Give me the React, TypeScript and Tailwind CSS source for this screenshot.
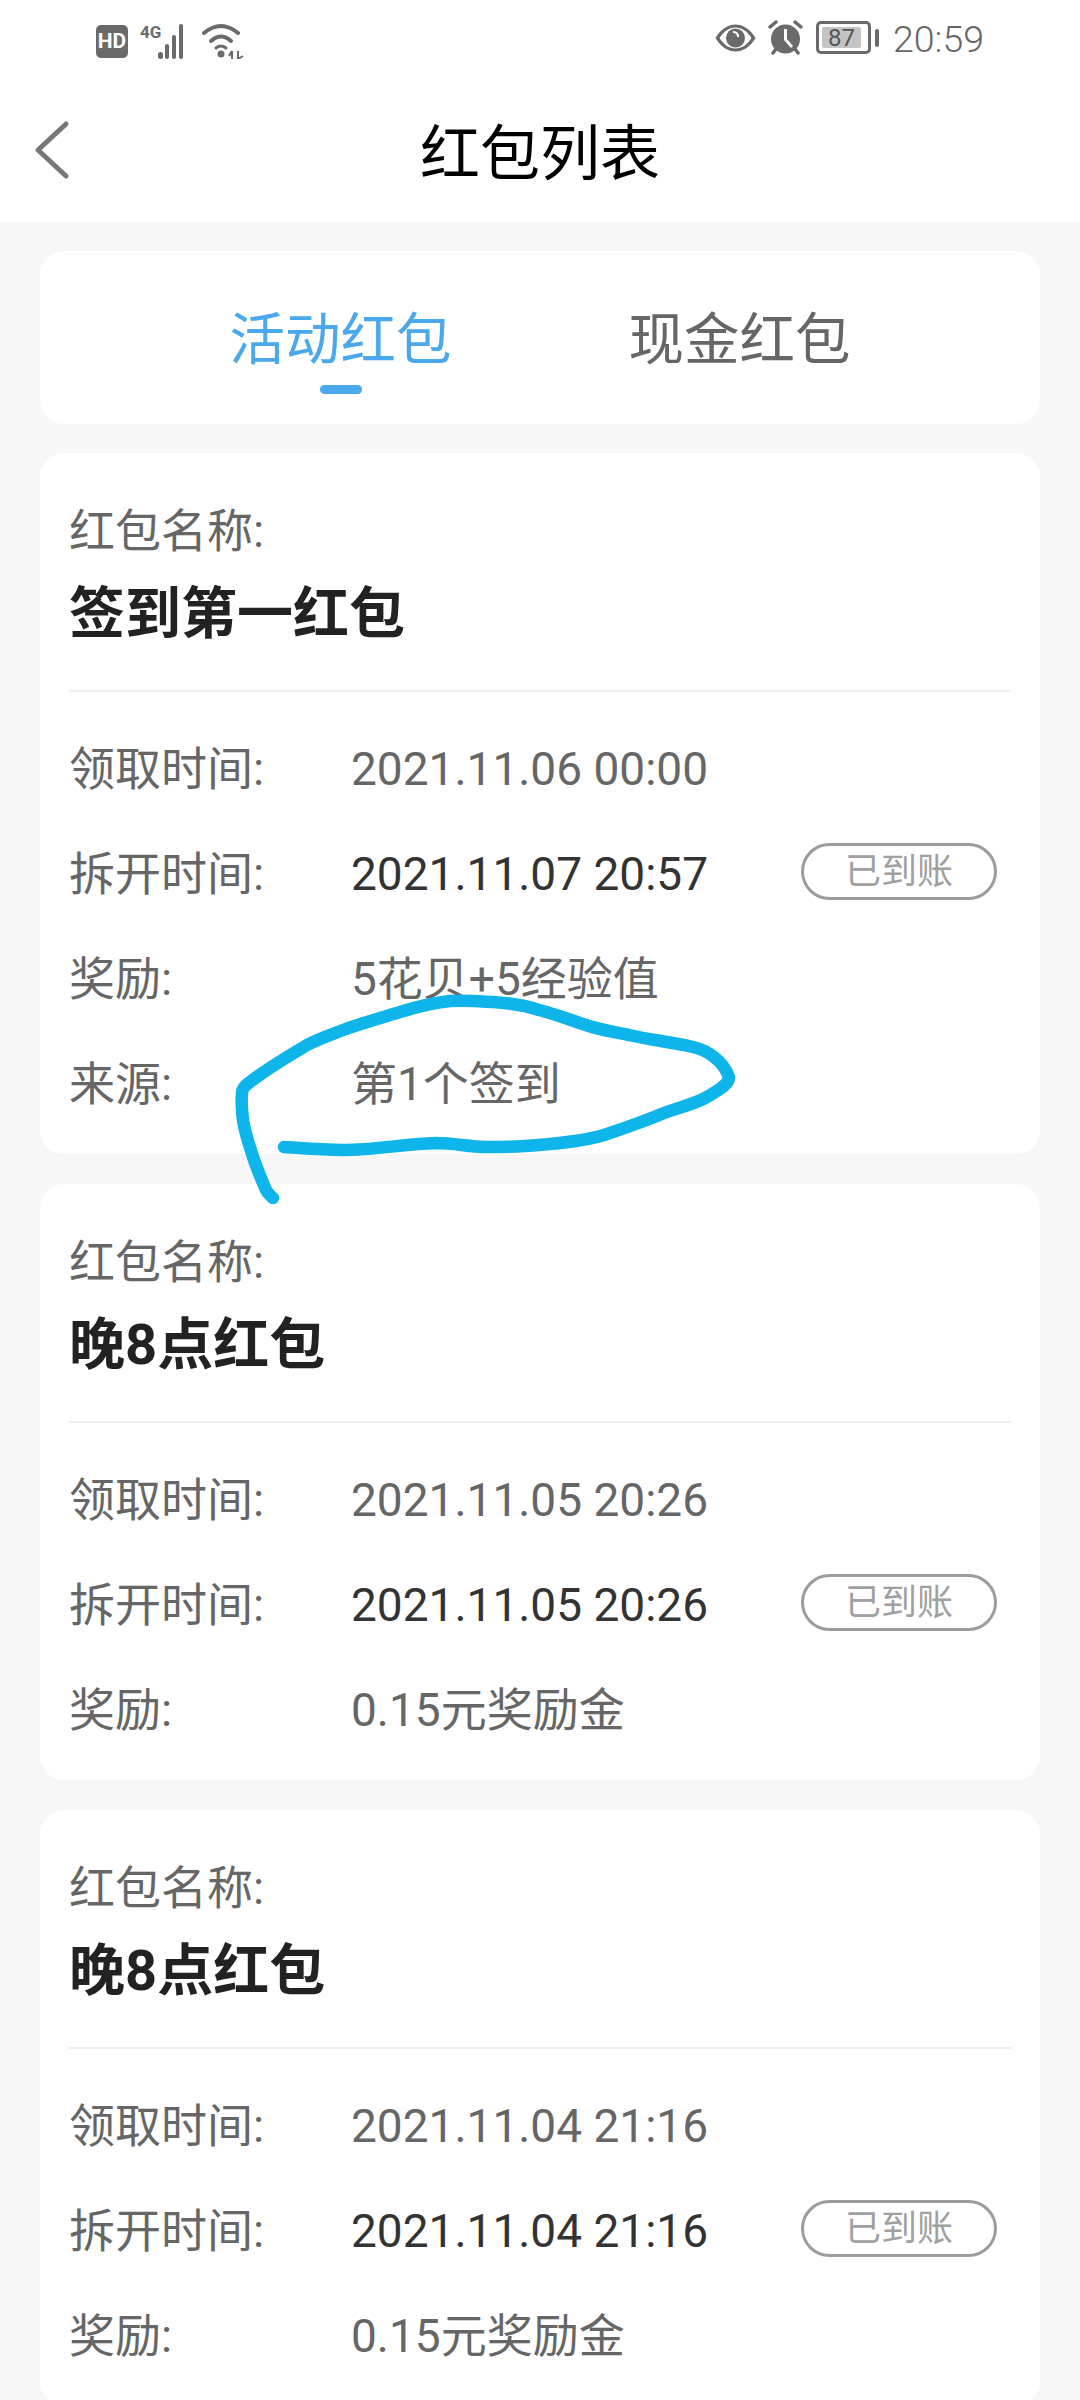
const FONT = "font-['Roboto','Noto_Sans_CJK_SC',sans-serif]";

function StatusLeft() {
  return (
    <div className="flex items-center">
      <div className="flex h-[33px] w-[32px] items-center justify-center rounded-[5px] bg-[#6a6a6a] text-[21px] leading-none font-bold text-white">HD</div>
      <div className="relative ml-[12px] h-[35px] w-[53px]">
        <span className="absolute top-[-1px] left-0 text-[17px] leading-[18px] font-bold text-[#6a6a6a]">4G</span>
        <svg className="absolute top-0 left-0" width="53" height="35" viewBox="0 0 53 35" fill="#6a6a6a">
          <rect x="18" y="28" width="5" height="7" rx="2.5" />
          <rect x="25" y="20" width="4" height="15" rx="2" />
          <rect x="32" y="11" width="4" height="24" rx="2" />
          <rect x="39" y="0" width="4" height="35" rx="2" />
        </svg>
      </div>
      <svg className="ml-[9px]" width="43" height="36" viewBox="0 0 43 36" fill="none">
        <path d="M2 10 Q19 -4 36 10" stroke="#6a6a6a" strokeWidth="4" strokeLinecap="round" />
        <path d="M9 18 Q19 9 29 18" stroke="#6a6a6a" strokeWidth="4" strokeLinecap="round" />
        <path d="M14 25 Q19 21 24 25" stroke="#6a6a6a" strokeWidth="3" strokeLinecap="round" />
        <circle cx="19" cy="31" r="3.5" fill="#6a6a6a" />
        <path d="M30 28 L30 36 M27 33 L30 28 M36 28 L36 36 L41 33" stroke="#6a6a6a" strokeWidth="2" />
      </svg>
    </div>
  );
}

function StatusRight() {
  return (
    <div className="flex items-center">
      <svg width="41" height="28" viewBox="0 0 41 28">
        <path fillRule="evenodd" fill="#6a6a6a" d="M0.5 14 C6 5 13 0.5 20.5 0.5 C28 0.5 35 5 40.5 14 C35 23 28 27.5 20.5 27.5 C13 27.5 6 23 0.5 14 Z M4.5 14 C9 21 14.5 24.5 20.5 24.5 C26.5 24.5 32 21 36.5 14 C32 7 26.5 3.5 20.5 3.5 C14.5 3.5 9 7 4.5 14 Z" />
        <circle cx="20.5" cy="14" r="9.5" fill="#6a6a6a" />
        <path d="M18 8 A4.5 4.5 0 0 1 23 13" stroke="#fff" strokeWidth="2" fill="none" />
      </svg>
      <svg className="ml-[12px]" width="35" height="35" viewBox="0 0 35 35" fill="#6a6a6a">
        <circle cx="17.5" cy="19" r="14.5" />
        <path d="M16 9 L16 20 L23 28 L25 26 L19 19 L19 9 Z" fill="#fff" />
        <path d="M2 7 L8 2 M33 7 L27 2 M5 33 L8 29 M30 33 L27 29" stroke="#6a6a6a" strokeWidth="3.5" strokeLinecap="round" />
      </svg>
      <div className="relative ml-[13px] flex h-[33px] w-[55px] items-center rounded-[5px] border-[3px] border-[#6a6a6a] p-[3px]">
        <div className="flex h-full w-[39px] items-center justify-center rounded-[2px] bg-[#c4c4c4] text-[24px] leading-none text-[#555]">87</div>
      </div>
      <div className="ml-[4px] h-[18px] w-[4px] rounded-[2px] bg-[#6a6a6a]" />
      <span className="mt-[3px] ml-[14px] text-[37.5px] leading-[40px] font-light text-[#666]">20:59</span>
    </div>
  );
}

function Row({ label, value, dark, pill }: { label: string; value: string; dark?: boolean; pill?: boolean }) {
  return (
    <div className="flex h-[105px] items-center">
      <div className="w-[282px] text-[46px] leading-[60px] text-[#666]">{label}</div>
      <div className={dark ? "flex-1 text-[46px] leading-[60px] text-[#333]" : "flex-1 text-[46px] leading-[60px] text-[#666]"}>{value}</div>
      {pill && (
        <div className="mr-[14px] mb-[5px] flex h-[57px] w-[196px] items-center justify-center rounded-full border-[3px] border-[#9c9c9c] pt-[2px] text-[36px] leading-none text-[#a0a0a0]">已到账</div>
      )}
    </div>
  );
}

function Card({ name, rows }: { name: string; rows: { label: string; value: string; dark?: boolean; pill?: boolean }[] }) {
  return (
    <section className="mx-[40px] mb-[30px] shrink-0 rounded-[24px] bg-white pt-[48px] pr-[29px] pb-[18px] pl-[29px]">
      <div className="text-[46px] leading-[60px] text-[#666]">红包名称:</div>
      <div className="mt-[21px] text-[56px] leading-[64px] font-bold text-[#222]">{name}</div>
      <div className="mt-[44px] mb-[24px] h-[2px] bg-[#eeeeee]" />
      {rows.map((r) => (
        <Row key={r.label} {...r} />
      ))}
    </section>
  );
}

export default function App() {
  return (
    <div className={`relative flex h-[2400px] w-[1080px] flex-col overflow-hidden bg-[#f7f7f7] ${FONT}`}>
      <header className="h-[222px] shrink-0 bg-white">
        <div className="flex h-[81px] items-end justify-between pr-[96px] pb-[22px] pl-[96px]">
          <StatusLeft />
          <StatusRight />
        </div>
        <div className="relative flex h-[141px] items-center justify-center pt-[6px]">
          <svg className="absolute top-[39px] left-[34px]" width="36" height="60" viewBox="0 0 36 60" fill="none">
            <path d="M32 4 L4 30 L32 56" stroke="#777" strokeWidth="5" strokeLinecap="round" strokeLinejoin="round" />
          </svg>
          <h1 className="text-[60px] leading-[70px] font-normal text-black">红包列表</h1>
        </div>
      </header>

      <nav className="mx-[40px] mt-[29px] mb-[29px] h-[173px] shrink-0 rounded-[24px] bg-white pt-[60px]">
        <div className="flex justify-center gap-[177px]">
          <div className="flex w-[222px] flex-col items-center">
            <span className="text-[55.5px] leading-[60px] whitespace-nowrap text-[#4aa8ec]">活动红包</span>
            <span className="mt-[14px] h-[9px] w-[42px] rounded-full bg-[#4aa8ec]" />
          </div>
          <span className="w-[222px] text-[55.5px] leading-[60px] whitespace-nowrap text-[#666]">现金红包</span>
        </div>
      </nav>

      <Card
        name="签到第一红包"
        rows={[
          { label: "领取时间:", value: "2021.11.06 00:00" },
          { label: "拆开时间:", value: "2021.11.07 20:57", dark: true, pill: true },
          { label: "奖励:", value: "5花贝+5经验值" },
          { label: "来源:", value: "第1个签到" },
        ]}
      />
      <Card
        name="晚8点红包"
        rows={[
          { label: "领取时间:", value: "2021.11.05 20:26" },
          { label: "拆开时间:", value: "2021.11.05 20:26", dark: true, pill: true },
          { label: "奖励:", value: "0.15元奖励金" },
        ]}
      />
      <Card
        name="晚8点红包"
        rows={[
          { label: "领取时间:", value: "2021.11.04 21:16" },
          { label: "拆开时间:", value: "2021.11.04 21:16", dark: true, pill: true },
          { label: "奖励:", value: "0.15元奖励金" },
        ]}
      />

      <svg className="pointer-events-none absolute top-0 left-0" width="1080" height="1300" viewBox="0 0 1080 1300" fill="none">
        <path
          d="M284 1147 C300 1148 320 1150 343 1150 C375 1150 405 1144 436 1143 C455 1143 468 1147 486 1147 C505 1147 520 1147 539 1145 C562 1143 584 1141 604 1135 C625 1128 645 1121 664 1113 C680 1107 695 1104 707 1097 C718 1090 729 1085 729 1077 C726 1069 722 1063 714 1057 C708 1052 701 1049 693 1047 C672 1042 650 1040 629 1035 C614 1032 600 1030 586 1025 C570 1020 555 1014 539 1010 C524 1005 510 1003 493 1002 C478 1001 464 1000 450 1001 C432 1003 416 1007 400 1012 C380 1018 362 1023 343 1030 C330 1035 318 1039 307 1045 C287 1057 268 1068 250 1082 C244 1086 242 1089 242 1093 C241 1102 242 1111 243 1120 C245 1134 250 1147 254 1160 C258 1171 262 1181 266 1190 C268 1194 271 1196 273 1198"
          stroke="#0db5ea"
          strokeWidth="12.5"
          strokeLinecap="round"
          strokeLinejoin="round"
        />
      </svg>
    </div>
  );
}
